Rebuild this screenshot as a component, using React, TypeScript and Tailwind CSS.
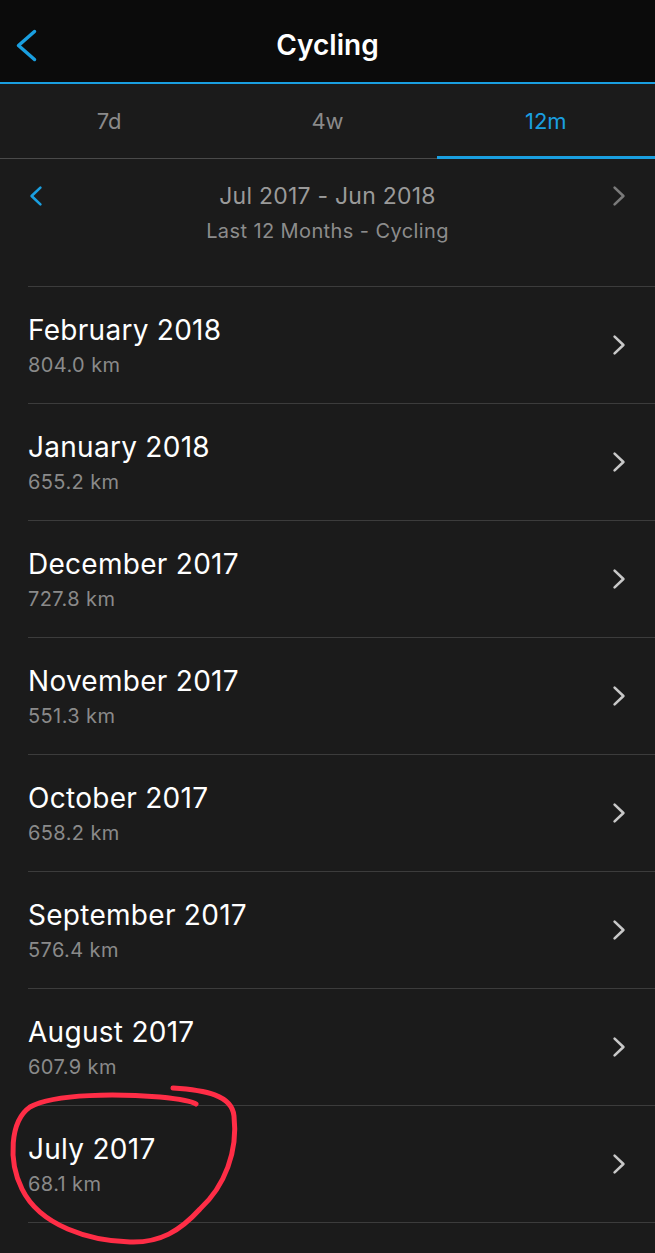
import React from 'react';

const months = [
  { name: 'February 2018', km: '804.0 km' },
  { name: 'January 2018', km: '655.2 km' },
  { name: 'December 2017', km: '727.8 km' },
  { name: 'November 2017', km: '551.3 km' },
  { name: 'October 2017', km: '658.2 km' },
  { name: 'September 2017', km: '576.4 km' },
  { name: 'August 2017', km: '607.9 km' },
  { name: 'July 2017', km: '68.1 km' },
];

const Chevron = ({ dir, color, w, h, sw }: { dir: 'l' | 'r'; color: string; w: number; h: number; sw: number }) => (
  <svg width={w} height={h} viewBox={`0 0 ${w} ${h}`} fill="none">
    <polyline
      points={dir === 'l' ? `${w - sw} ${sw}, ${sw} ${h / 2}, ${w - sw} ${h - sw}` : `${sw} ${sw}, ${w - sw} ${h / 2}, ${sw} ${h - sw}`}
      stroke={color}
      strokeWidth={sw}
      strokeLinecap="round"
      strokeLinejoin="round"
    />
  </svg>
);

const App: React.FC = () => {
  const tabs = ['7d', '4w', '12m'];

  return (
    <div className="min-h-screen w-[655px] bg-[#1b1b1b] font-['Inter',sans-serif] overflow-hidden">
      {/* Nav bar */}
      <header className="h-[84px] bg-[#0b0b0b] flex items-center relative border-b-2 border-[#1a9fe0]">
        <div className="absolute left-[15px] top-[28px]">
          <Chevron dir="l" color="#1a9fe0" w={23} h={35} sw={3.5} />
        </div>
        <h1 className="flex-1 text-center text-white text-[28px] font-semibold pt-[8px]">Cycling</h1>
      </header>

      {/* Tabs */}
      <nav className="h-[75px] flex border-b border-[#4a4a4a]">
        {tabs.map((t, i) => (
          <div
            key={t}
            className={`flex-1 flex items-center justify-center text-[22px] ${
              i === 2 ? 'text-[#1a9fe0] border-b-[3px] border-[#1a9fe0] -mb-px pt-[3px]' : 'text-[#8a8a8a]'
            }`}
          >
            {t}
          </div>
        ))}
      </nav>

      {/* Range */}
      <section className="h-[127px] relative flex flex-col items-center pt-[22px]">
        <div className="absolute left-[29px] top-[26px]">
          <Chevron dir="l" color="#1a9fe0" w={14} h={22} sw={2.6} />
        </div>
        <div className="absolute left-[612px] top-[26px]">
          <Chevron dir="r" color="#7a7a7a" w={14} h={22} sw={2.6} />
        </div>
        <div className="text-[#9a9a9a] text-[23px] leading-[30px] tracking-[0.01em]">Jul 2017 - Jun 2018</div>
        <div className="text-[#8c8c8c] text-[20px] leading-[26px] mt-[7px] tracking-[0.02em]">Last 12 Months - Cycling</div>
      </section>

      {/* Month list */}
      <ul>
        {months.map((m, i) => (
          <li key={m.name} className="ml-[28px] h-[117px] border-t border-[#3c3c3c] flex items-center relative">
            <div className="flex-1">
              <div className="text-white text-[28px] leading-[34px] tracking-[0.01em]">{m.name}</div>
              <div className="text-[#8a8a8a] text-[20px] leading-[26px] mt-[5px] tracking-[0.02em]">{m.km}</div>
            </div>
            <div className="mr-[29px]">
              <Chevron dir="r" color="#c8c8c8" w={14} h={22} sw={2.6} />
            </div>
            {i === months.length - 1 && (
              <svg className="absolute left-[-28px] top-[-25px] pointer-events-none" width="250" height="173" viewBox="0 0 250 173" fill="none">
                <path
                  d="M173 7 C205 9, 232 14, 234 35 C238 70, 225 105, 200 128 C180 150, 160 162, 130 161 C90 160, 40 145, 22 108 C8 80, 10 40, 30 26 C55 12, 120 13, 160 16 C180 18, 192 20, 196 23"
                  stroke="#ff2d46"
                  strokeWidth="5"
                  strokeLinecap="round"
                  strokeLinejoin="round"
                />
              </svg>
            )}
          </li>
        ))}
        <li className="ml-[28px] border-t border-[#3c3c3c] h-[40px]" />
      </ul>
    </div>
  );
};

export default App;
